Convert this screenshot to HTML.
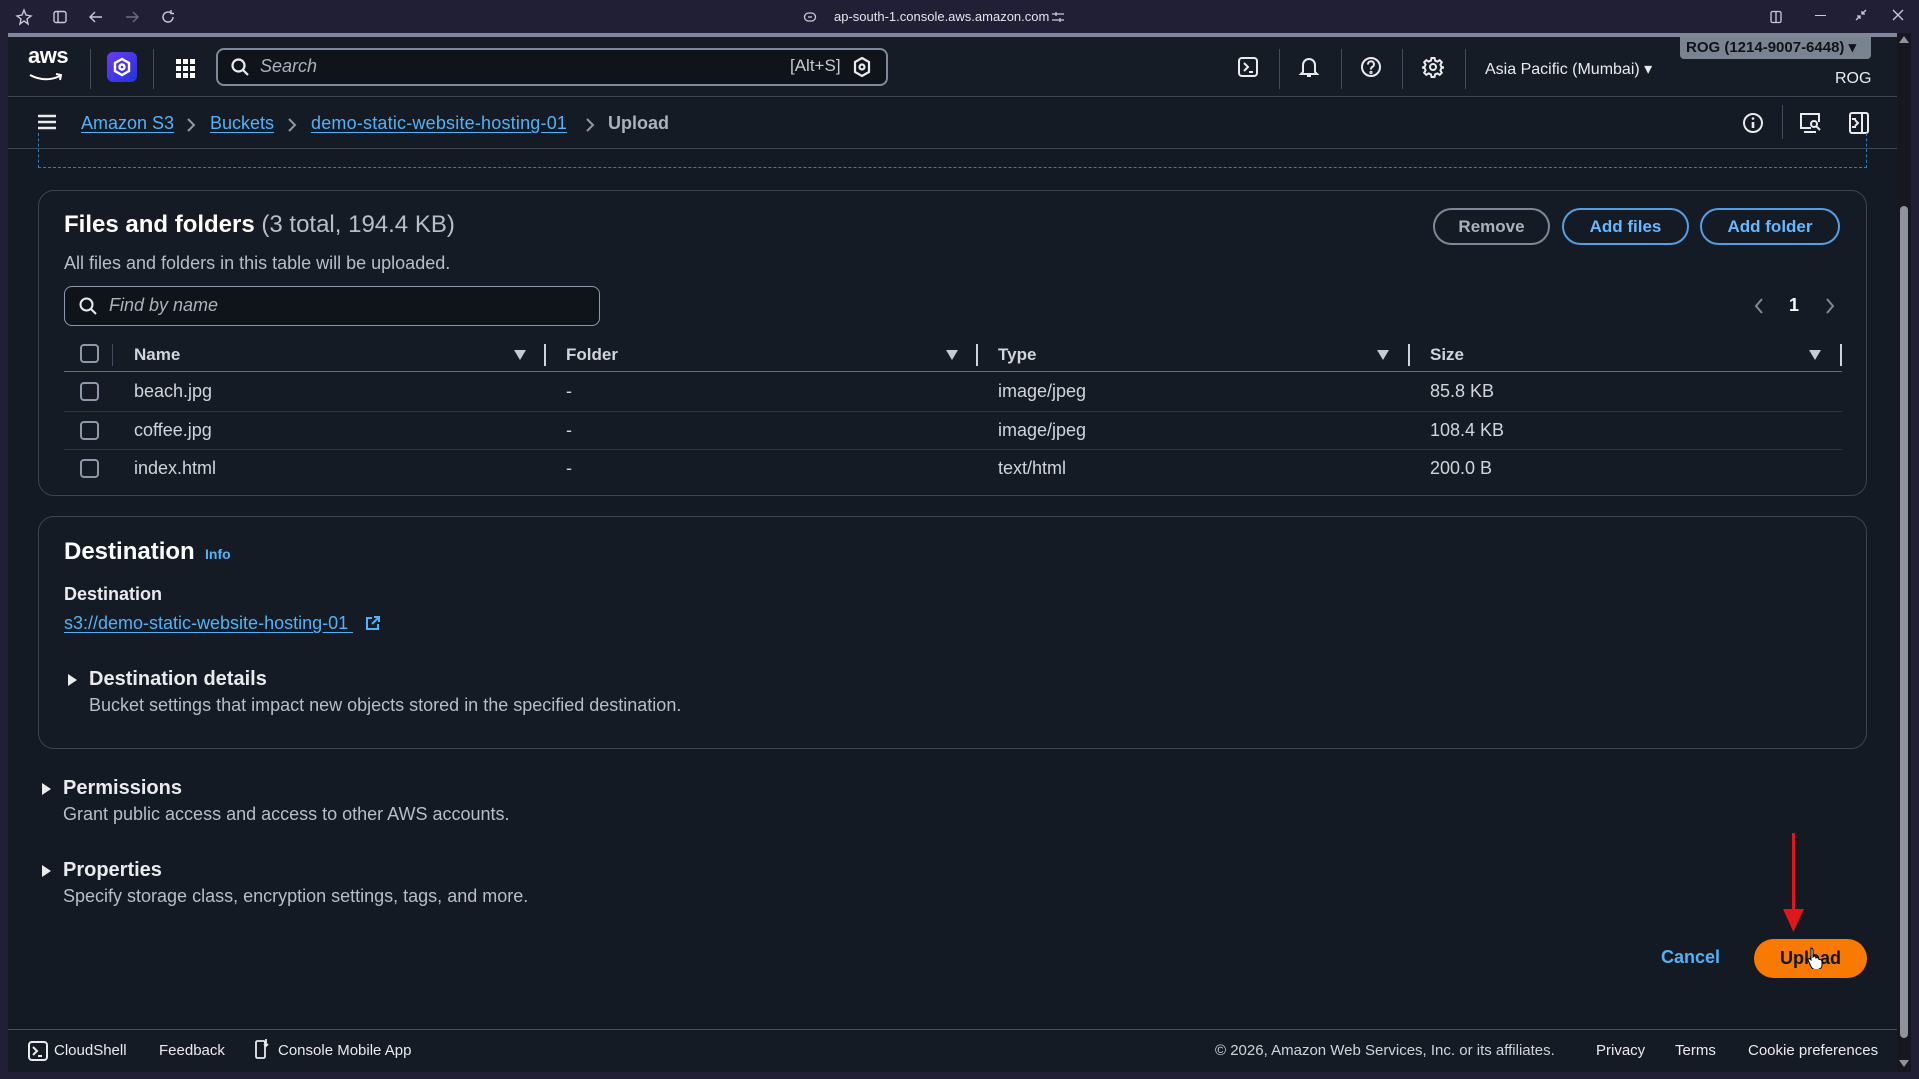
<!DOCTYPE html>
<html><head><meta charset="utf-8">
<style>
*{box-sizing:border-box;margin:0;padding:0}
body{width:1919px;height:1079px;overflow:hidden;background:#201f36;font-family:"Liberation Sans",sans-serif;color:#e9ebed;position:relative}
.a{position:absolute}
.win{left:8px;top:33px;width:1889px;height:1039px;background:#141a23;overflow:hidden}
.hdr{left:0;top:0;width:1889px;height:64px;background:#161c25;border-top:4px solid #7d8998;border-bottom:1px solid #3b4452}
.bc{left:0;top:64px;width:1889px;height:52px;border-bottom:1px solid #3b4452;background:#151b24}
.vd{width:1px;height:40px;background:#414d5c}
.lnk{color:#53b2f5;text-decoration:underline;text-underline-offset:3px}
.panel{border:1px solid #3b4452;border-radius:16px;background:#151b24}
.btn{border:2px solid #539fe5;border-radius:20px;color:#66b8ff;font-weight:bold;font-size:17px;text-align:center;line-height:33px;height:37px}
.cb{width:19px;height:19px;border:2px solid #8d99a8;border-radius:4px}
.th{font-weight:bold;font-size:17px;color:#d1d5db}
.td{font-size:18px;color:#d1d5db}
.sep{width:2px;height:22px;background:#d1d5db}
.sub{font-size:18px;color:#b6bec9}
.tri{width:0;height:0;border-left:9px solid #e9ebed;border-top:6px solid transparent;border-bottom:6px solid transparent}
.sort{width:0;height:0;border-top:10px solid #c6cbd2;border-left:6px solid transparent;border-right:6px solid transparent}
</style></head><body>
<svg class="a" style="left:15px;top:8px" width="18" height="18" viewBox="0 0 18 18" fill="none" stroke="#c9cbd6" stroke-width="1.4"><path d="M9 2l2 5 5 1-4 3 1 5-4-3-4 3 1-5-4-3 5-1z"/></svg>
<svg class="a" style="left:52px;top:9px" width="16" height="16" viewBox="0 0 16 16" fill="none" stroke="#c9cbd6" stroke-width="1.4"><rect x="2" y="2.5" width="12" height="11" rx="2"/><path d="M6 3v10"/></svg>
<svg class="a" style="left:88px;top:9px" width="16" height="16" viewBox="0 0 16 16" fill="none" stroke="#c9cbd6" stroke-width="1.4"><path d="M14 8H3M7 3L2 8l5 5"/></svg>
<svg class="a" style="left:124px;top:9px" width="16" height="16" viewBox="0 0 16 16" fill="none" stroke="#6b6e80" stroke-width="1.4"><path d="M2 8h11M9 3l5 5-5 5"/></svg>
<svg class="a" style="left:160px;top:9px" width="16" height="16" viewBox="0 0 16 16" fill="none" stroke="#c9cbd6" stroke-width="1.4"><path d="M13 8a5 5 0 1 1-2-4M11 1v3.5h3"/></svg>
<svg class="a" style="left:803px;top:10px" width="14" height="14" viewBox="0 0 14 14" fill="none" stroke="#c9cbd6" stroke-width="1.3"><rect x="1.5" y="3" width="11" height="8" rx="4"/><path d="M5 7h4"/></svg>
<div class="a" style="left:834px;top:9px;font-size:13px;color:#e3e4ea">ap-south-1.console.aws.amazon.com</div>
<svg class="a" style="left:1051px;top:10px" width="14" height="14" viewBox="0 0 14 14" fill="none" stroke="#c9cbd6" stroke-width="1.3"><path d="M1 4h12M1 10h12M5 2v4M9 8v4"/></svg>
<svg class="a" style="left:1769px;top:10px" width="14" height="14" viewBox="0 0 14 14" fill="none" stroke="#c9cbd6" stroke-width="1.3"><rect x="2" y="1.5" width="10" height="11" rx="1.5"/><path d="M7 2v10"/></svg>
<div class="a" style="left:1815px;top:15px;width:11px;height:1px;background:#c9cbd6"></div>
<svg class="a" style="left:1854px;top:8px" width="14" height="14" viewBox="0 0 14 14" fill="none" stroke="#c9cbd6" stroke-width="1.3"><path d="M2 12l4-4M3 8h3v3M12 2L8 6M8 3v3h3"/></svg>
<svg class="a" style="left:1892px;top:9px" width="12" height="12" viewBox="0 0 12 12" stroke="#c9cbd6" stroke-width="1.3"><path d="M1 1l10 10M11 1L1 11"/></svg>

<div class="a win">
 <div class="a hdr">
  <div class="a" style="left:20px;top:6px;font-size:22px;font-weight:bold;color:#fff;letter-spacing:-0.5px">aws</div>
  <svg class="a" style="left:20px;top:36px" width="36" height="10" viewBox="0 0 36 10" fill="none" stroke="#fff" stroke-width="2"><path d="M2 2q15 8 30 1M28 1l5 1-1 5"/></svg>
  <div class="a vd" style="left:82px;top:12px"></div>
  <div class="a" style="left:99px;top:15px;width:30px;height:30px;border-radius:6px;background:linear-gradient(135deg,#6a3cf0,#2233d8)"></div>
  <svg class="a" style="left:103px;top:19px" width="22" height="22" viewBox="0 0 22 22" fill="none" stroke="#fff" stroke-width="2.4"><path d="M11 3l7 4v8l-7 4-7-4V7z"/><circle cx="11" cy="11" r="2.5"/></svg>
  <div class="a vd" style="left:145px;top:12px"></div>
  <svg class="a" style="left:167px;top:21px" width="20" height="20" viewBox="0 0 20 20" fill="#fff"><rect x="1" y="1" width="5" height="5"/><rect x="8" y="1" width="5" height="5"/><rect x="15" y="1" width="5" height="5"/><rect x="1" y="8" width="5" height="5"/><rect x="8" y="8" width="5" height="5"/><rect x="15" y="8" width="5" height="5"/><rect x="1" y="15" width="5" height="5"/><rect x="8" y="15" width="5" height="5"/><rect x="15" y="15" width="5" height="5"/></svg>
  <div class="a" style="left:208px;top:11px;width:672px;height:38px;border:2px solid #7d8998;border-radius:8px;background:#0f141a"></div>
  <svg class="a" style="left:222px;top:20px" width="20" height="20" viewBox="0 0 20 20" fill="none" stroke="#e9ebed" stroke-width="2.2"><circle cx="8.5" cy="8.5" r="6"/><path d="M13 13l5 5"/></svg>
  <div class="a" style="left:252px;top:19px;font-size:18px;font-style:italic;color:#a9b2bd">Search</div>
  <div class="a" style="left:782px;top:19px;font-size:17px;color:#c6cbd2">[Alt+S]</div>
  <svg class="a" style="left:844px;top:19px" width="20" height="22" viewBox="0 0 20 22" fill="none" stroke="#e9ebed" stroke-width="2.2"><path d="M10 2l7 4v10l-7 4-7-4V6z"/><circle cx="10" cy="11" r="2.5"/></svg>
  <svg class="a" style="left:1229px;top:19px" width="22" height="22" viewBox="0 0 22 22" fill="none" stroke="#e9ebed" stroke-width="2"><rect x="2" y="2" width="18" height="18" rx="3"/><path d="M7 7l4 4-4 4M12 16h4"/></svg>
  <div class="a vd" style="left:1271px;top:12px"></div>
  <svg class="a" style="left:1290px;top:18px" width="22" height="24" viewBox="0 0 22 24" fill="none" stroke="#e9ebed" stroke-width="2"><path d="M5 17V10a6 6 0 0 1 12 0v7l2 2H3z"/><path d="M9 21h4"/></svg>
  <div class="a vd" style="left:1333px;top:12px"></div>
  <svg class="a" style="left:1352px;top:19px" width="22" height="22" viewBox="0 0 22 22" fill="none" stroke="#e9ebed" stroke-width="2"><circle cx="11" cy="11" r="9"/><path d="M8 8.5a3 3 0 1 1 4 2.6c-1 .5-1 1.2-1 2.4"/><circle cx="11" cy="16.5" r=".6"/></svg>
  <div class="a vd" style="left:1394px;top:12px"></div>
  <svg class="a" style="left:1414px;top:19px" width="22" height="22" viewBox="0 0 22 22" fill="none" stroke="#e9ebed" stroke-width="2"><circle cx="11" cy="11" r="3"/><path d="M9.5 2h3l.6 2.6 2.3 1 2.3-1.4 2.1 2.1-1.4 2.3 1 2.3L22 11.5v0l-2.6.6-1 2.3 1.4 2.3-2.1 2.1-2.3-1.4-2.3 1-.6 2.6h-3l-.6-2.6-2.3-1-2.3 1.4-2.1-2.1 1.4-2.3-1-2.3L0 11.5l2.6-.6 1-2.3-1.4-2.3 2.1-2.1 2.3 1.4 2.3-1z"/></svg>
  <div class="a vd" style="left:1457px;top:12px"></div>
  <div class="a" style="left:1477px;top:22px;font-size:16px;color:#e9ebed">Asia Pacific (Mumbai) ▾</div>
  <div class="a" style="left:1672px;top:0px;width:191px;height:22px;background:#7a8491;border-radius:0 0 4px 4px;font-size:15px;font-weight:bold;color:#0f141a;line-height:22px;padding-left:6px">ROG (1214-9007-6448) ▾</div>
  <div class="a" style="left:1827px;top:33px;font-size:16px;color:#e9ebed">ROG</div>
 </div>
 <div class="a bc">
  <svg class="a" style="left:30px;top:17px" width="18" height="16" viewBox="0 0 18 16" stroke="#e9ebed" stroke-width="2.4"><path d="M0 2h18M0 8h18M0 14h18"/></svg>
  <div class="a lnk" style="left:73px;top:16px;font-size:18px">Amazon S3</div>
  <svg class="a" style="left:178px;top:20px" width="10" height="16" viewBox="0 0 10 16" fill="none" stroke="#8d99a8" stroke-width="2"><path d="M2 2l6 6-6 6"/></svg>
  <div class="a lnk" style="left:202px;top:16px;font-size:18px">Buckets</div>
  <svg class="a" style="left:279px;top:20px" width="10" height="16" viewBox="0 0 10 16" fill="none" stroke="#8d99a8" stroke-width="2"><path d="M2 2l6 6-6 6"/></svg>
  <div class="a lnk" style="left:303px;top:16px;font-size:18px;letter-spacing:0.2px">demo-static-website-hosting-01</div>
  <svg class="a" style="left:577px;top:20px" width="10" height="16" viewBox="0 0 10 16" fill="none" stroke="#8d99a8" stroke-width="2"><path d="M2 2l6 6-6 6"/></svg>
  <div class="a" style="left:600px;top:16px;font-size:18px;font-weight:bold;color:#a9b2bd">Upload</div>
  <svg class="a" style="left:1734px;top:15px" width="22" height="22" viewBox="0 0 22 22" fill="none" stroke="#e9ebed" stroke-width="2"><circle cx="11" cy="11" r="9"/><path d="M11 10v6" stroke-width="2.6"/><circle cx="11" cy="6.5" r="1.3" fill="#e9ebed" stroke="none"/></svg>
  <div class="a" style="left:1774px;top:8px;width:1px;height:34px;background:#414d5c"></div>
  <svg class="a" style="left:1791px;top:15px" width="24" height="22" viewBox="0 0 24 22" fill="none" stroke="#e9ebed" stroke-width="2"><path d="M20 10V2H2v14h10M5 20h12"/><circle cx="15" cy="12" r="3"/><path d="M17 14l4 4"/></svg>
  <svg class="a" style="left:1840px;top:14px" width="22" height="24" viewBox="0 0 22 24" fill="none" stroke="#e9ebed" stroke-width="2"><rect x="2" y="2" width="18" height="20" rx="2"/><path d="M14 2v20M4 8h4M4 16h4M7 9l3 3-3 3"/></svg>
 </div>

 <div class="a" style="left:30px;top:100px;width:1829px;height:35px;border-left:1px dashed #2f7cc0;border-right:1px dashed #2f7cc0;border-bottom:1px dashed #2f7cc0"></div>

 <div class="a panel" style="left:30px;top:157px;width:1829px;height:306px"></div>
 <div class="a" style="left:56px;top:178px;font-size:24px;font-weight:bold;color:#fff">Files and folders <span style="font-weight:normal;color:#b6bec9">(3 total, 194.4 KB)</span></div>
 <div class="a sub" style="left:56px;top:220px">All files and folders in this table will be uploaded.</div>
 <div class="a" style="left:1425px;top:175px;width:117px;height:37px;border:2px solid #7d8998;border-radius:20px;color:#a9b2bd;font-weight:bold;font-size:17px;text-align:center;line-height:33px">Remove</div>
 <div class="a btn" style="left:1554px;top:175px;width:127px">Add files</div>
 <div class="a btn" style="left:1692px;top:175px;width:140px">Add folder</div>
 <div class="a" style="left:56px;top:253px;width:536px;height:40px;border:1px solid #8d99a8;border-radius:8px;background:#0f141a"></div>
 <svg class="a" style="left:70px;top:263px" width="20" height="20" viewBox="0 0 20 20" fill="none" stroke="#e9ebed" stroke-width="2"><circle cx="8.5" cy="8.5" r="6"/><path d="M13 13l5 5"/></svg>
 <div class="a" style="left:101px;top:262px;font-size:18px;font-style:italic;color:#a9b2bd">Find by name</div>
 <svg class="a" style="left:1746px;top:264px" width="10" height="18" viewBox="0 0 10 18" fill="none" stroke="#7d8998" stroke-width="2"><path d="M8 2L2 9l6 7"/></svg>
 <div class="a" style="left:1781px;top:262px;font-size:18px;font-weight:bold;color:#fff">1</div>
 <svg class="a" style="left:1817px;top:264px" width="10" height="18" viewBox="0 0 10 18" fill="none" stroke="#7d8998" stroke-width="2"><path d="M2 2l6 7-6 7"/></svg>

 <div class="a cb" style="left:72px;top:311px"></div>
 <div class="a" style="left:104px;top:311px;width:1px;height:22px;background:#414d5c"></div>
 <div class="a th" style="left:126px;top:312px">Name</div>
 <div class="a sort" style="left:506px;top:317px"></div>
 <div class="a sep" style="left:536px;top:311px"></div>
 <div class="a th" style="left:558px;top:312px">Folder</div>
 <div class="a sort" style="left:938px;top:317px"></div>
 <div class="a sep" style="left:968px;top:311px"></div>
 <div class="a th" style="left:990px;top:312px">Type</div>
 <div class="a sort" style="left:1369px;top:317px"></div>
 <div class="a sep" style="left:1400px;top:311px"></div>
 <div class="a th" style="left:1422px;top:312px">Size</div>
 <div class="a sort" style="left:1801px;top:317px"></div>
 <div class="a sep" style="left:1832px;top:311px"></div>
 <div class="a" style="left:56px;top:338px;width:1778px;height:1px;background:#5f6b7a"></div>
 <div class="a" style="left:56px;top:378px;width:1778px;height:1px;background:#2c3440"></div>
 <div class="a" style="left:56px;top:416px;width:1778px;height:1px;background:#2c3440"></div>

 <div class="a cb" style="left:72px;top:349px"></div>
 <div class="a td" style="left:126px;top:348px">beach.jpg</div>
 <div class="a td" style="left:558px;top:348px">-</div>
 <div class="a td" style="left:990px;top:348px">image/jpeg</div>
 <div class="a td" style="left:1422px;top:348px">85.8 KB</div>

 <div class="a cb" style="left:72px;top:388px"></div>
 <div class="a td" style="left:126px;top:387px">coffee.jpg</div>
 <div class="a td" style="left:558px;top:387px">-</div>
 <div class="a td" style="left:990px;top:387px">image/jpeg</div>
 <div class="a td" style="left:1422px;top:387px">108.4 KB</div>

 <div class="a cb" style="left:72px;top:426px"></div>
 <div class="a td" style="left:126px;top:425px">index.html</div>
 <div class="a td" style="left:558px;top:425px">-</div>
 <div class="a td" style="left:990px;top:425px">text/html</div>
 <div class="a td" style="left:1422px;top:425px">200.0 B</div>

 <div class="a panel" style="left:30px;top:483px;width:1829px;height:233px"></div>
 <div class="a" style="left:56px;top:505px;font-size:24px;font-weight:bold;color:#fff">Destination</div>
 <div class="a" style="left:197px;top:513px;font-size:14px;font-weight:bold;color:#53b2f5">Info</div>
 <div class="a" style="left:56px;top:551px;font-size:18px;font-weight:bold;color:#e9ebed">Destination</div>
 <div class="a lnk" style="left:56px;top:580px;font-size:18px">s3://demo-static-website-hosting-01&nbsp;</div>
 <svg class="a" style="left:357px;top:582px" width="16" height="16" viewBox="0 0 16 16" fill="none" stroke="#53b2f5" stroke-width="2"><path d="M7 3H2v11h11V9M9 2h5v5M14 2L7 9"/></svg>
 <div class="a tri" style="left:60px;top:641px"></div>
 <div class="a" style="left:81px;top:635px;font-size:20px;font-weight:bold;color:#e9ebed">Destination details</div>
 <div class="a sub" style="left:81px;top:662px">Bucket settings that impact new objects stored in the specified destination.</div>

 <div class="a tri" style="left:34px;top:750px"></div>
 <div class="a" style="left:55px;top:744px;font-size:20px;font-weight:bold;color:#e9ebed">Permissions</div>
 <div class="a sub" style="left:55px;top:771px">Grant public access and access to other AWS accounts.</div>
 <div class="a tri" style="left:34px;top:832px"></div>
 <div class="a" style="left:55px;top:826px;font-size:20px;font-weight:bold;color:#e9ebed">Properties</div>
 <div class="a sub" style="left:55px;top:853px">Specify storage class, encryption settings, tags, and more.</div>

 <div class="a" style="left:1653px;top:914px;font-size:18px;font-weight:bold;color:#53b2f5">Cancel</div>
 <div class="a" style="left:1746px;top:906px;width:113px;height:39px;border-radius:20px;background:#f97a00;color:#0f141a;font-weight:bold;font-size:18px;text-align:center;line-height:39px">Upload</div>
 <div class="a" style="left:1784px;top:800px;width:3px;height:78px;background:#e0161b"></div>
 <svg class="a" style="left:1775px;top:876px" width="21" height="23" viewBox="0 0 21 23"><path d="M0 0h21L10.5 23z" fill="#e0161b"/></svg>
 <svg class="a" style="left:1799px;top:914px" width="16" height="22" viewBox="0 0 16 22"><path d="M4 1c1 0 2 1 2 2v7l1-1c1 0 2 1 2 2l1-.5c1 0 2 1 2 2l1 0c1 0 2 1 2 2v4c0 2-2 4-5 4H8c-2 0-3-1-4-3L1 13c0-1 1-2 2-1l1 1V3c0-1 0-2 0-2z" fill="#fff" stroke="#000" stroke-width="1"/></svg>

 <div class="a" style="left:0;top:996px;width:1889px;height:43px;border-top:1px solid #414d5c;background:#151b24"></div>
 <svg class="a" style="left:20px;top:1008px" width="20" height="20" viewBox="0 0 20 20" fill="none" stroke="#e9ebed" stroke-width="2"><rect x="1" y="1" width="18" height="18" rx="3"/><path d="M5 6l4 4-4 4M10 15h4"/></svg>
 <div class="a" style="left:46px;top:1009px;font-size:15px;color:#e9ebed">CloudShell</div>
 <div class="a" style="left:151px;top:1009px;font-size:15px;color:#e9ebed">Feedback</div>
 <svg class="a" style="left:247px;top:1005px" width="14" height="22" viewBox="0 0 14 22" fill="none" stroke="#e9ebed" stroke-width="1.8"><rect x="1" y="3" width="9" height="17" rx="1.5"/><path d="M11 1v7M9 6l2 2 2-2"/></svg>
 <div class="a" style="left:270px;top:1009px;font-size:15px;color:#e9ebed">Console Mobile App</div>
 <div class="a" style="left:1207px;top:1009px;font-size:15px;color:#d1d5db">© 2026, Amazon Web Services, Inc. or its affiliates.</div>
 <div class="a" style="left:1588px;top:1009px;font-size:15px;color:#e9ebed">Privacy</div>
 <div class="a" style="left:1667px;top:1009px;font-size:15px;color:#e9ebed">Terms</div>
 <div class="a" style="left:1740px;top:1009px;font-size:15px;color:#e9ebed">Cookie preferences</div>
</div>
<div class="a" style="left:1897px;top:33px;width:14px;height:1039px;background:#17171f"></div>
<div class="a" style="left:1900px;top:206px;width:8px;height:832px;background:#8e939c;border-radius:4px"></div>
<div class="a" style="left:1899px;top:36px;width:0;height:0;border-bottom:7px solid #8e939c;border-left:5px solid transparent;border-right:5px solid transparent"></div>
<div class="a" style="left:1899px;top:1060px;width:0;height:0;border-top:7px solid #8e939c;border-left:5px solid transparent;border-right:5px solid transparent"></div>
</body></html>
